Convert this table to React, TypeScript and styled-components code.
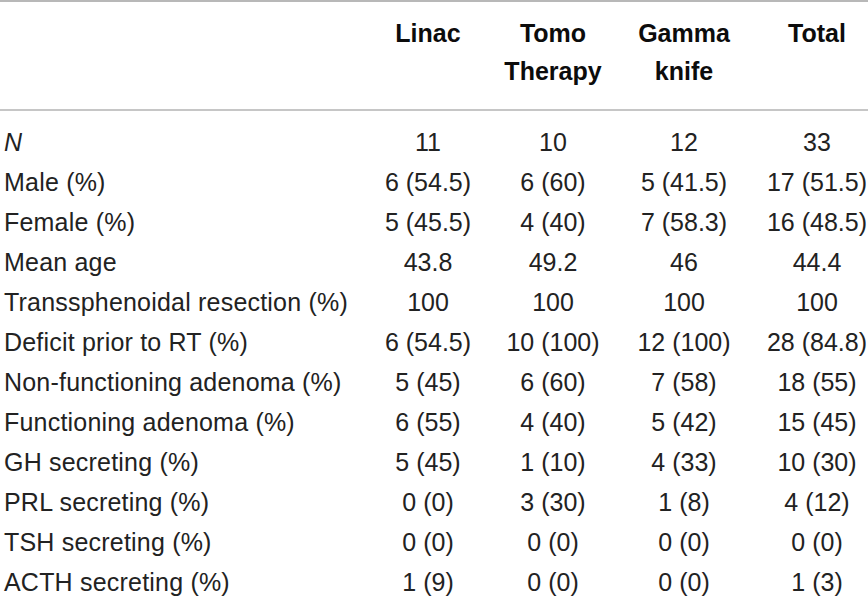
import styled, { createGlobalStyle } from 'styled-components'

const GlobalStyle = createGlobalStyle`
  html, body {
    margin: 0;
    padding: 0;
    background: #ffffff;
    overflow: hidden;
  }
`

const Page = styled.div`
  width: 868px;
  height: 598px;
  overflow: hidden;
  background: #ffffff;
`

const Table = styled.table`
  width: 882px;
  table-layout: fixed;
  border-collapse: collapse;
  border-top: 2px solid #b8b8b8;
  font-family: 'Liberation Sans', Arial, sans-serif;
  color: #222222;
`

const Col = styled.col<{ $w: number }>`
  width: ${(p) => p.$w}px;
`

const HeadCell = styled.th`
  padding: 12px 0 19px;
  border-bottom: 2px solid #c6c6c6;
  font-size: 25px;
  font-weight: 700;
  line-height: 38px;
  text-align: center;
  vertical-align: top;
  color: #0c0c0c;
`

const Body = styled.tbody`
  tr:first-child td {
    padding-top: 11px;
  }
`

const Label = styled.td<{ $italic?: boolean }>`
  padding: 0 0 0 4px;
  font-size: 25px;
  line-height: 40px;
  letter-spacing: 0.2px;
  text-align: left;
  white-space: nowrap;
  font-style: ${(p) => (p.$italic ? 'italic' : 'normal')};
`

const Value = styled.td`
  padding: 0;
  font-size: 25px;
  line-height: 40px;
  text-align: center;
  white-space: nowrap;
`

const rows = [
  { label: 'N', italic: true, values: ['11', '10', '12', '33'] },
  { label: 'Male (%)', values: ['6 (54.5)', '6 (60)', '5 (41.5)', '17 (51.5)'] },
  { label: 'Female (%)', values: ['5 (45.5)', '4 (40)', '7 (58.3)', '16 (48.5)'] },
  { label: 'Mean age', values: ['43.8', '49.2', '46', '44.4'] },
  { label: 'Transsphenoidal resection (%)', values: ['100', '100', '100', '100'] },
  { label: 'Deficit prior to RT (%)', values: ['6 (54.5)', '10 (100)', '12 (100)', '28 (84.8)'] },
  { label: 'Non-functioning adenoma (%)', values: ['5 (45)', '6 (60)', '7 (58)', '18 (55)'] },
  { label: 'Functioning adenoma (%)', values: ['6 (55)', '4 (40)', '5 (42)', '15 (45)'] },
  { label: 'GH secreting (%)', values: ['5 (45)', '1 (10)', '4 (33)', '10 (30)'] },
  { label: 'PRL secreting (%)', values: ['0 (0)', '3 (30)', '1 (8)', '4 (12)'] },
  { label: 'TSH secreting (%)', values: ['0 (0)', '0 (0)', '0 (0)', '0 (0)'] },
  { label: 'ACTH secreting (%)', values: ['1 (9)', '0 (0)', '0 (0)', '1 (3)'] },
]

const widths = [366, 124, 126, 136, 130]

export default function App() {
  return (
    <Page>
      <GlobalStyle />
      <Table>
        <colgroup>
          {widths.map((w, i) => (
            <Col key={i} $w={w} />
          ))}
        </colgroup>
        <thead>
          <tr>
            <HeadCell />
            <HeadCell>Linac</HeadCell>
            <HeadCell>
              Tomo
              <br />
              Therapy
            </HeadCell>
            <HeadCell>
              Gamma
              <br />
              knife
            </HeadCell>
            <HeadCell>Total</HeadCell>
          </tr>
        </thead>
        <Body>
          {rows.map((r) => (
            <tr key={r.label}>
              <Label $italic={r.italic}>{r.label}</Label>
              {r.values.map((v, i) => (
                <Value key={i}>{v}</Value>
              ))}
            </tr>
          ))}
        </Body>
      </Table>
    </Page>
  )
}
